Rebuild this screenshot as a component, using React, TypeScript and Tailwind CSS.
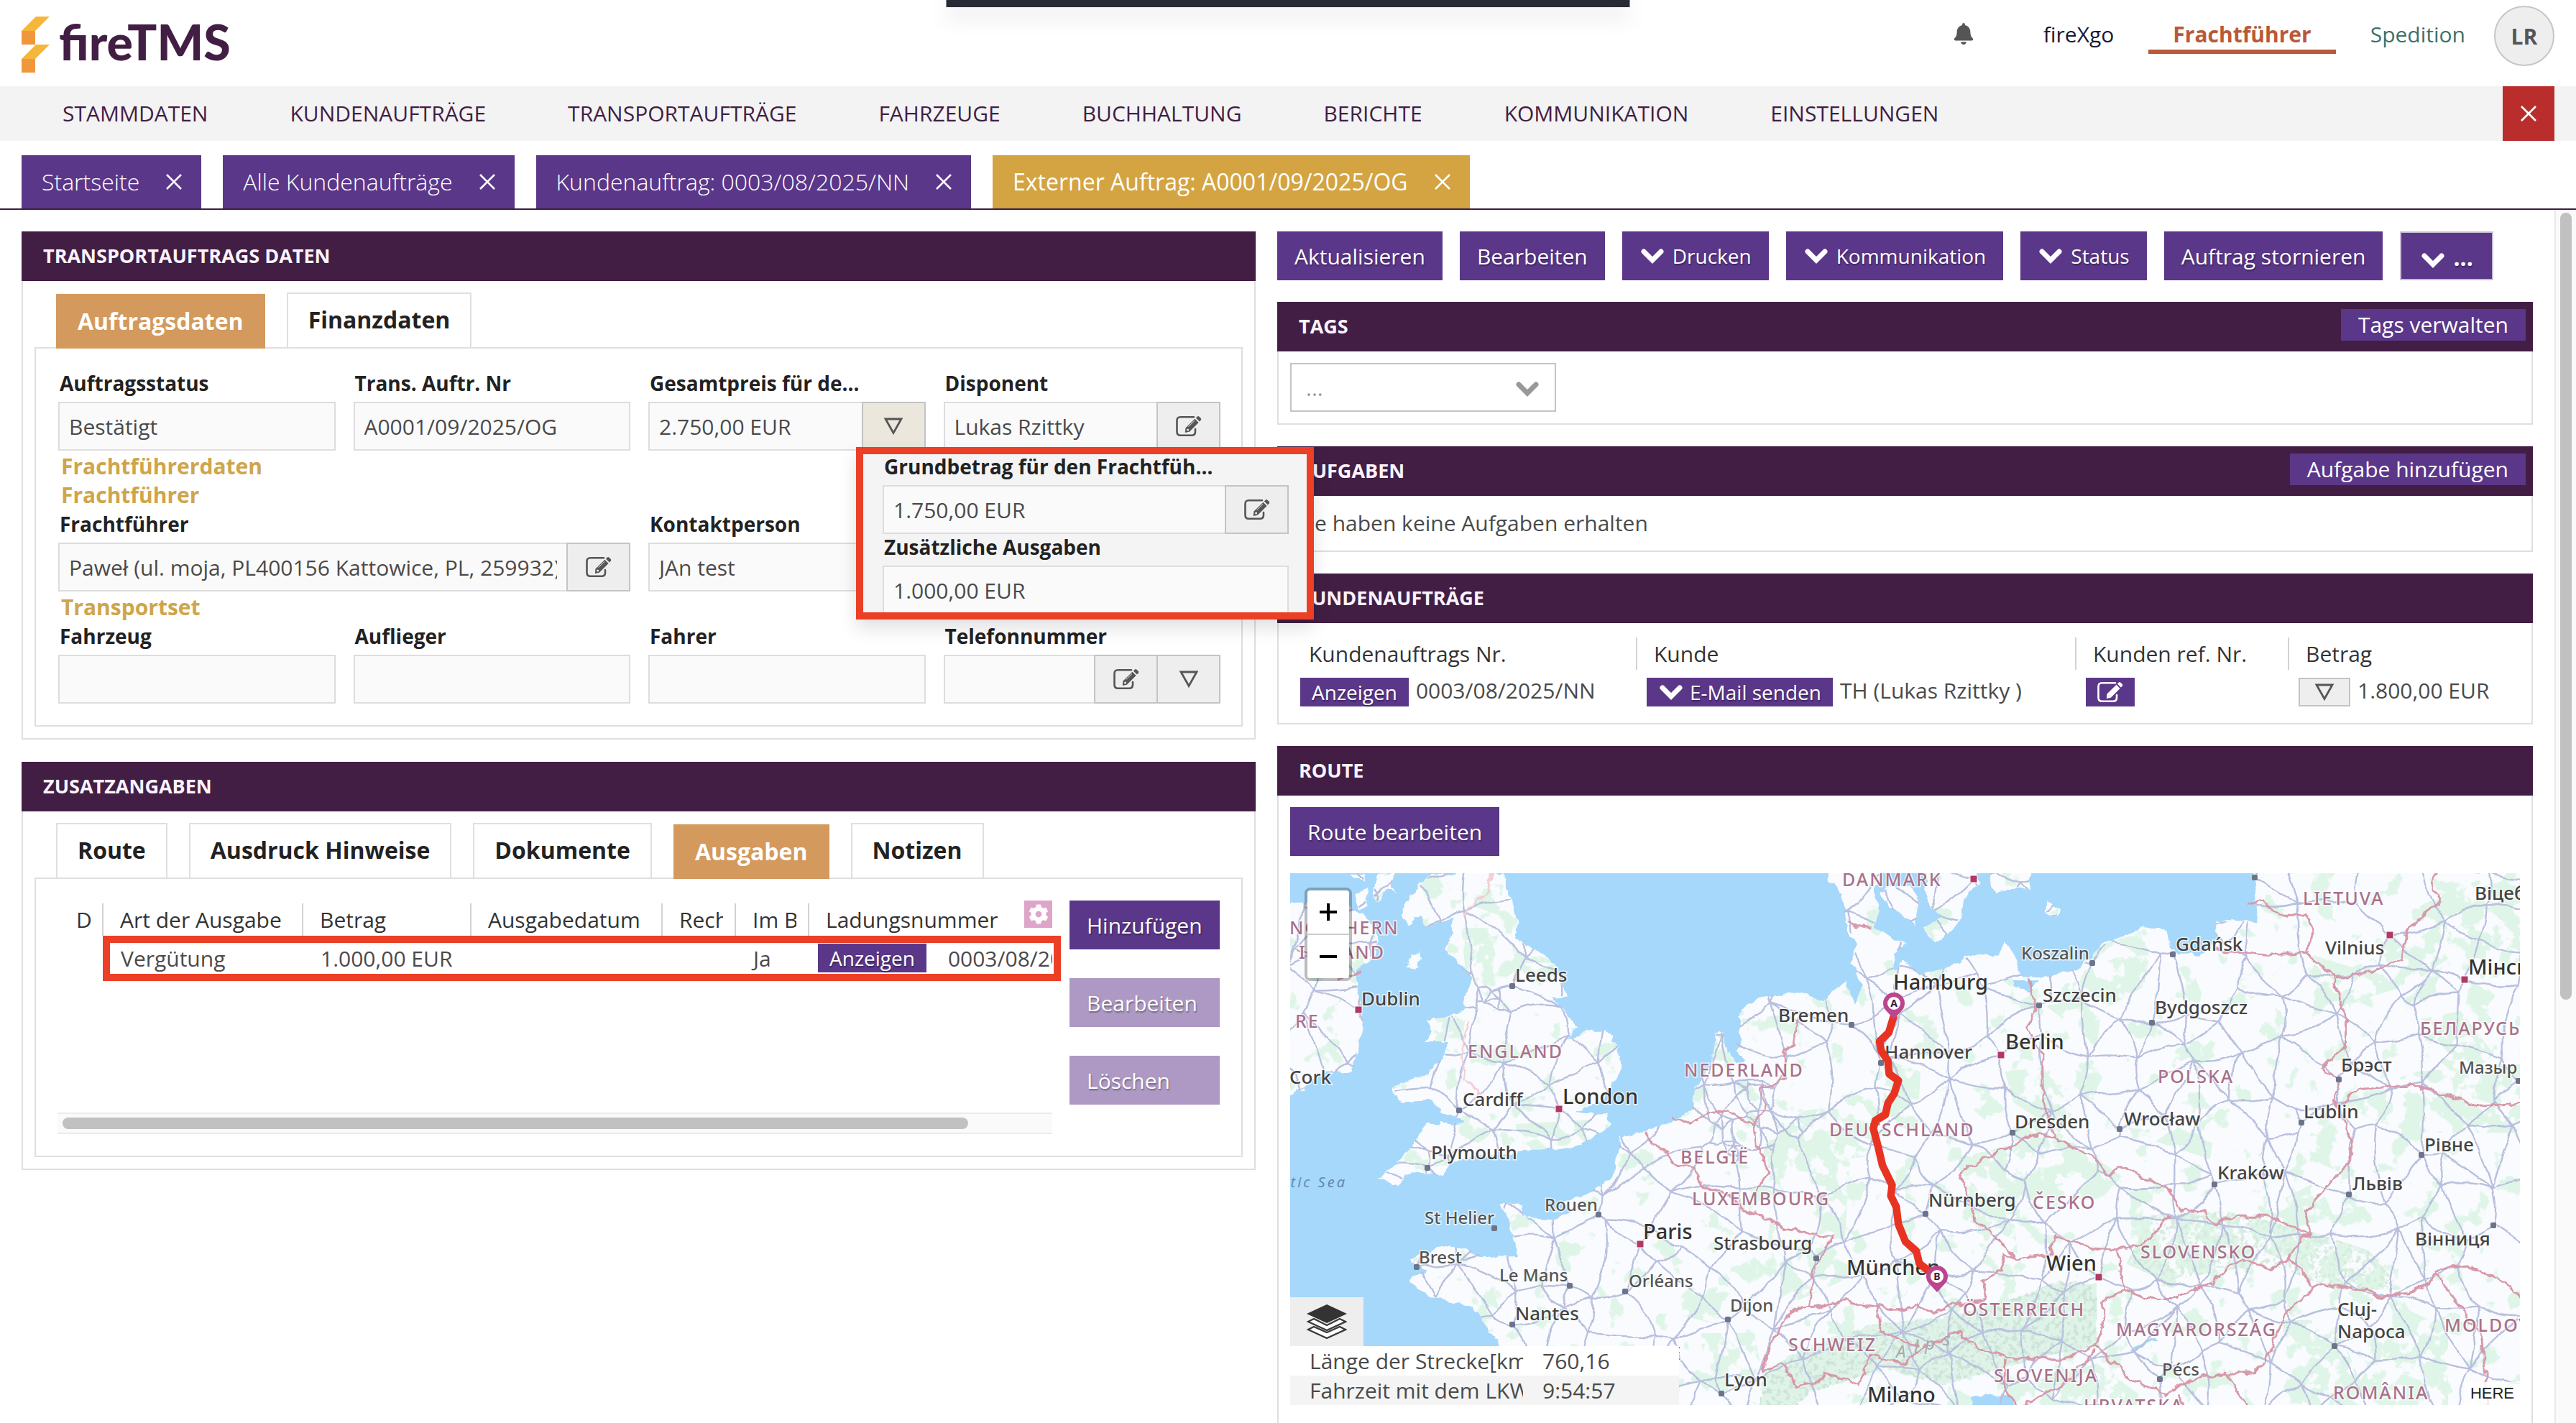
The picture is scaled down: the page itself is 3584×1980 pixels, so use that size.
import { useMemo, type ReactNode } from 'react';
import { FaBell, FaCog } from 'react-icons/fa';

/* ---------- icons ---------- */

function Chevron({ className }: { className: string }) {
  return (
    <svg viewBox="0 0 32 24" className={className} aria-hidden="true">
      <path d="M4 6 L16 18 L28 6" fill="none" stroke="currentColor" strokeWidth="7" strokeLinecap="round" strokeLinejoin="miter" />
    </svg>
  );
}

function Cross({ className }: { className: string }) {
  return (
    <svg viewBox="0 0 24 24" className={className} aria-hidden="true">
      <path d="M2 2 L22 22 M22 2 L2 22" fill="none" stroke="currentColor" strokeWidth="2.6" />
    </svg>
  );
}

function EditIcon({ className }: { className: string }) {
  return (
    <svg viewBox="0 0 36 30" className={className} aria-hidden="true">
      <path d="M25 2.2 H6.5 Q1.5 2.2 1.5 7.2 V22.8 Q1.5 27.8 6.5 27.8 H22 Q27 27.8 27 22.8 V19" fill="none" stroke="currentColor" strokeWidth="2.6" strokeLinecap="round" />
      <path d="M13.5 17.5 L26.5 4.8 L31.6 10 L18.8 22.8 L12.8 24 Z" fill="currentColor" />
      <path d="M27.8 3.6 L30 1.5 Q31.2 .6 32.4 1.7 L34.8 4.1 Q35.8 5.3 34.8 6.5 L32.8 8.6 Z" fill="currentColor" />
      <path d="M17.5 15.6 L26 7.4" stroke="#eee" strokeWidth="1" />
      <circle cx="16.6" cy="20" r="1.5" fill="#eee" />
    </svg>
  );
}

function Triangle({ className }: { className: string }) {
  return (
    <svg viewBox="0 0 28 26" className={className} aria-hidden="true">
      <path d="M3 3 H25 L14 22.5 Z" fill="none" stroke="currentColor" strokeWidth="2.8" />
    </svg>
  );
}

function LayersIcon({ className }: { className: string }) {
  return (
    <svg viewBox="0 0 56 50" className={className} aria-hidden="true">
      <path d="M2 36 L28 48 L54 36 L46 32 L28 40 L10 32 Z" fill="#fff" stroke="#3a3a3a" strokeWidth="2.4" />
      <path d="M2 25 L28 37 L54 25 L46 21 L28 30 L10 21 Z" fill="#fff" stroke="#3a3a3a" strokeWidth="2.4" />
      <path d="M0 14 L28 1 L56 14 L28 27 Z" fill="#333" />
    </svg>
  );
}

function FlameLogo() {
  return (
    <svg viewBox="0 0 40 78" className="h-[78px] w-10" aria-hidden="true">
      <path d="M20 0 H39 L19 20 H0 Z M20 39 H39 L19 59 H0 Z" fill="#f5b63c" />
      <path d="M0 20 H19 V39 H0 Z M0 59 H19 V78 H0 Z" fill="#f0973c" />
    </svg>
  );
}

/* ---------- small building blocks ---------- */

const NAV = ['STAMMDATEN', 'KUNDENAUFTRÄGE', 'TRANSPORTAUFTRÄGE', 'FAHRZEUGE', 'BUCHHALTUNG', 'BERICHTE', 'KOMMUNIKATION', 'EINSTELLUNGEN'];

const PAGES = [
  { title: 'Startseite', active: false },
  { title: 'Alle Kundenaufträge', active: false },
  { title: 'Kundenauftrag: 0003/08/2025/NN', active: false },
  { title: 'Externer Auftrag: A0001/09/2025/OG', active: true },
];

function Panel({ title, action, children, className = '' }: { title: string; action?: string; children: ReactNode; className?: string }) {
  return (
    <section>
      <header className="flex h-[69px] items-center justify-between bg-[#421e44] pl-[30px] pr-[10px]">
        <h2 className="text-[27px] font-bold text-[#fbf3fb]">{title}</h2>
        {action && (
          <button type="button" className="mb-[6px] h-11 bg-[#5b3789] px-6 text-[30px] leading-10 text-white">
            {action}
          </button>
        )}
      </header>
      <div className={`border-2 border-t-0 border-[#dfdfdf] ${className}`}>{children}</div>
    </section>
  );
}

function PurpleButton({ children, className = 'px-6 text-[30px]', disabled }: { children: ReactNode; className?: string; disabled?: boolean }) {
  return (
    <button
      type="button"
      disabled={disabled}
      className={`flex h-[68px] items-center gap-[10px] bg-[#5b3789] whitespace-nowrap text-white [text-shadow:1px_2px_2px_rgba(0,0,0,0.35)] disabled:bg-[#ad99c4] ${className}`}
    >
      {children}
    </button>
  );
}

function SmallButton({ children, className = '', label }: { children: ReactNode; className?: string; label?: string }) {
  return (
    <button
      type="button"
      aria-label={label}
      className={`inline-flex h-10 shrink-0 items-center gap-2 bg-[#5b3789] px-4 text-[28px] text-white [text-shadow:1px_2px_2px_rgba(0,0,0,0.35)] ${className}`}
    >
      {children}
    </button>
  );
}

function TabStrip({ tabs, active }: { tabs: string[]; active: string }) {
  return (
    <div role="tablist" className="relative z-[1] -mb-[2px] flex h-[78px] items-end gap-[30px] px-[30px]">
      {tabs.map((t) =>
        t === active ? (
          <button key={t} type="button" role="tab" aria-selected="true" className="h-[76px] bg-[#d4995c] px-[30px] text-[32px] font-bold text-white">
            {t}
          </button>
        ) : (
          <button key={t} type="button" role="tab" aria-selected="false" className="h-[78px] border-2 border-[#dfdfdf] bg-white px-7 pb-[2px] text-[32px] font-bold text-[#222]">
            {t}
          </button>
        ),
      )}
    </div>
  );
}

function Field({ id, label, value = '', buttons = [], open, className = '', children }: {
  id: string;
  label: string;
  value?: string;
  buttons?: ('edit' | 'more')[];
  open?: boolean;
  className?: string;
  children?: ReactNode;
}) {
  return (
    <div className={`relative min-w-0 ${className}`}>
      <label htmlFor={id} className="mb-1 block truncate pl-[2px] text-[28px] leading-11 font-bold text-[#222]">
        {label}
      </label>
      <div className="flex h-[68px]">
        <input id={id} readOnly value={value} className="w-0 min-w-0 flex-1 border-2 border-[#dfdcdf] bg-[#fafafa] px-[13px] text-[30px] text-[#4a4a4a] outline-none" />
        {buttons.map((b) => (
          <button
            key={b}
            type="button"
            aria-label={b === 'edit' ? `${label} bearbeiten` : `${label} Details`}
            className={`-ml-[2px] flex w-[89px] items-center justify-center border-2 border-[#c4c4c4] text-[#555] ${open && b === 'more' ? 'bg-[#ece7dd]' : 'bg-[#eee]'}`}
          >
            {b === 'edit' ? <EditIcon className="h-[30px] w-9" /> : <Triangle className="h-[26px] w-7" />}
          </button>
        ))}
      </div>
      {children}
    </div>
  );
}

function SectionTitle({ children }: { children: ReactNode }) {
  return <h3 className="col-span-4 px-1 pt-1 text-[30px] leading-9 font-bold text-[#cfa54b]">{children}</h3>;
}

/* ---------- map ---------- */

const LAND = [
  // Great Britain
  'M400 304 L350 350 L325 400 L345 425 L375 400 L380 430 L450 410 L440 450 L435 480 L470 520 L495 545 L475 600 L480 615 L440 635 L385 640 L395 665 L380 690 L440 690 L430 720 L390 765 L305 795 L325 830 L400 825 L420 855 L465 865 L480 875 L445 880 L390 880 L360 915 L330 960 L270 1005 L315 1020 L350 985 L425 1000 L440 970 L500 955 L560 955 L620 940 L720 935 L780 915 L825 885 L820 860 L740 850 L800 830 L850 750 L845 700 L810 665 L770 665 L720 690 L745 655 L690 590 L720 585 L700 520 L665 490 L600 455 L605 420 L580 340 L570 304 Z',
  // Ireland and small islands
  'M20 375 L110 370 L190 375 L240 400 L265 440 L270 480 L215 530 L225 580 L235 640 L225 690 L210 760 L130 765 L90 800 L20 830 Z',
  'M340 520 L350 495 L370 485 L375 500 L355 522 Z',
  'M205 304 L240 304 L235 325 Z M270 304 L310 304 L300 335 L315 350 L290 340 L270 370 L258 355 Z M215 355 L245 340 L240 375 L225 385 Z',
  // Continent
  'M1345 280 L1350 330 L1385 350 L1385 420 L1420 470 L1400 510 L1430 560 L1410 605 L1390 555 L1350 580 L1335 600 L1275 575 L1180 590 L1130 630 L1140 680 L1105 720 L1098 670 L1078 670 L1070 740 L1030 790 L1020 850 L960 880 L850 910 L840 960 L835 1000 L770 1040 L710 1060 L735 1080 L690 1100 L620 1095 L612 1065 L565 1060 L590 1120 L605 1180 L540 1190 L490 1170 L440 1160 L370 1180 L345 1195 L385 1215 L345 1240 L375 1270 L440 1285 L510 1310 L525 1340 L560 1385 L600 1470 L640 1560 L3040 1560 L3040 280 L2363 280 L2375 415 L2275 415 L2275 460 L2230 495 L2165 480 L2155 432 L2100 430 L2000 470 L1950 520 L1860 545 L1810 540 L1790 490 L1770 460 L1755 495 L1690 490 L1640 520 L1568 535 L1530 505 L1505 530 L1500 490 L1535 470 L1500 450 L1455 430 L1470 390 L1455 340 L1480 280 Z',
  'M1470 345 L1540 330 L1565 370 L1555 425 L1530 400 L1495 385 Z',
  'M1585 280 L1700 280 L1705 330 L1670 360 L1665 400 L1640 440 L1600 460 L1575 430 L1620 405 L1590 380 L1575 340 Z',
  'M1730 280 L1830 280 L1828 345 L1800 335 L1745 352 Z',
  'M1868 368 L1900 385 L1892 405 L1865 392 Z',
];

const WATER = [
  'M1108 690 L1140 680 L1130 710 L1150 730 L1125 745 L1112 720 Z',
  'M2065 1395 L2130 1370 L2135 1375 L2075 1402 Z',
  'M1690 1510 L1730 1500 L1785 1505 L1795 1560 L1695 1560 Z',
  'M1790 550 L1850 555 L1830 575 L1795 565 Z',
];

const FORESTS = [
  'M470 430 L560 430 L540 560 L480 540 Z', 'M380 630 L480 620 L470 720 L390 700 Z', 'M500 330 L570 330 L560 400 L500 380 Z', 'M590 470 L700 510 L600 510 Z',
  'M1290 850 L1450 820 L1460 950 L1400 960 L1380 1240 L1240 1300 L1230 1200 L1330 1120 L1300 990 L1200 980 L1210 890 Z',
  'M1480 730 L1568 760 L1560 900 L1470 870 Z', 'M1650 960 L1900 900 L2050 1000 L2000 1050 L1790 1080 L1800 1180 L1700 1100 Z',
  'M1930 540 L2080 480 L2110 560 L2000 620 L1990 700 L1870 610 Z', 'M1770 760 L1860 750 L1930 840 L1900 900 L1790 830 Z',
  'M2500 490 L2600 520 L2750 460 L2760 380 L2900 320 L3040 340 L3040 480 L2920 560 L2860 480 L2740 560 L2600 600 Z',
  'M2570 830 L2750 760 L3040 740 L3040 900 L2750 900 L2650 870 Z', 'M2760 640 L2860 620 L2940 720 L2880 770 Z',
  'M2120 1090 L2300 1080 L2480 1120 L2640 1170 L2720 1260 L2560 1260 L2400 1200 L2150 1240 L2060 1200 Z',
  'M2430 1330 L2560 1330 L2620 1470 L2720 1300 L2830 1350 L2830 1560 L2480 1560 Z',
  'M2160 900 L2280 860 L2260 960 L2130 920 Z', 'M2500 900 L2580 920 L2570 990 L2500 960 Z', 'M2440 1050 L2520 1010 L2560 1100 L2470 1110 Z',
  'M640 1060 L680 1040 L620 1120 Z', 'M990 1240 L1100 1260 L1080 1340 L1000 1320 Z', 'M1800 1480 L1990 1430 L2090 1500 L2080 1560 L1790 1560 Z',
  'M600 880 L780 870 L720 930 L600 930 Z', 'M1040 1360 L1060 1480 L1190 1450 L1170 1360 Z',
];

const ALPS = 'M1190 1450 L1300 1390 L1460 1340 L1640 1320 L1760 1290 L1900 1240 L1990 1250 L1990 1390 L1880 1410 L1770 1440 L1620 1480 L1480 1440 L1300 1500 L1240 1560 L1180 1560 Z';

const BORDERS = [
  'M1275 635 L1265 700 L1240 710 L1245 770 L1185 800 L1195 840 L1170 880 L1175 930 L1205 990 L1190 1010 L1175 1045',
  'M975 860 L1010 880 L1060 855 L1110 850 L1170 885',
  'M910 895 L925 930 L965 945 L975 970 L1030 985 L1045 1025 L1110 1040 L1145 1080 L1190 1090 L1245 1120 L1355 1140 L1310 1220 L1300 1300 L1255 1315 L1210 1380 L1190 1450 L1240 1430 L1270 1480 L1330 1470 L1340 1450 L1420 1480 L1450 1410 L1530 1430 L1580 1385 L1660 1360 L1700 1395 L1790 1420 L1900 1420 L1990 1390 L2010 1310 L2000 1290 L2055 1260 L2040 1170',
  'M1300 1300 L1390 1285 L1465 1300 L1530 1310 L1555 1290 L1600 1315 L1665 1290 L1725 1285 L1715 1240 L1765 1215 L1765 1180 L1795 1190 L1760 1150 L1700 1100 L1660 990 L1740 950 L1840 905 L1890 910 L1960 945 L2000 975 L2020 1000 L2045 975 L2100 1000 L2165 1030 L2190 1080 L2240 1080 L2275 1110 L2330 1090 L2400 1090 L2500 1135',
  'M1465 1300 L1470 1350 L1530 1380 L1560 1390',
  'M1795 1190 L1880 1180 L1890 1140 L1980 1165 L2040 1170 L2105 1155 L2165 1090',
  'M2055 1260 L2100 1280 L2180 1280 L2270 1240 L2330 1190 L2400 1210 L2450 1190',
  'M1825 545 L1845 610 L1820 660 L1860 720 L1860 820 L1890 910',
  'M2490 485 L2555 540 L2585 640 L2585 700 L2530 750 L2565 780 L2560 830 L2600 920 L2595 970 L2540 1020 L2490 1080 L2500 1135 L2475 1140 L2450 1190 L2510 1250 L2630 1260 L2670 1280 L2770 1255 L2800 1220 L2850 1290 L2910 1370 L2930 1560',
  'M2275 480 L2400 493 L2500 485 M2350 370 L2390 370 L2430 400 L2490 400 L2505 430 L2490 485',
  'M2800 290 L2790 340 L2810 370 L2760 410 L2735 430 L2720 500 L2650 530 L2560 545',
  'M2565 840 L2620 800 L2740 790 L2850 820 L2900 840 L2960 835 L3040 830',
  'M2800 1215 L2880 1205 L2960 1240 L3040 1310',
  'M2510 1250 L2440 1320 L2400 1410 L2370 1450 L2240 1460 L2150 1500 L2060 1460 L1990 1390',
  'M1770 1420 L1770 1490 L1800 1530 L1910 1480 L1990 1400 M2300 1450 L2370 1560 M2190 1500 L2210 1560',
  'M75 480 L130 500 L180 545 L235 525 M1390 418 L1450 430',
];

const PALE_BORDERS = 'M490 640 L470 700 L475 780 L520 810 M475 400 L530 350 L550 290';

const ROUTE = 'M1503 635 L1492 670 L1470 690 L1474 712 L1490 735 L1493 765 L1515 780 L1505 810 L1490 832 L1484 858 L1460 872 L1455 890 L1466 930 L1477 975 L1500 1020 L1497 1045 L1510 1070 L1515 1110 L1532 1150 L1558 1172 L1565 1200 L1602 1228';

type Label = [string, number, number];

const BIG: Label[] = [['London', 712, 833], ['Paris', 905, 1144], ['Hamburg', 1503, 572], ['München', 1390, 1226], ['Milano', 1440, 1519], ['Berlin', 1770, 709], ['Мінск', 2878, 536], ['Wien', 1868, 1216]];
const MEDIUM: Label[] = [['Leeds', 598, 553], ['Dublin', 230, 608], ['Cork', 58, 788], ['Cardiff', 472, 838], ['Plymouth', 397, 961], ['Nantes', 598, 1330], ['Bremen', 1228, 645], ['Hannover', 1482, 730], ['Strasbourg', 1072, 1168], ['Lyon', 1098, 1482], ['Szczecin', 1860, 599], ['Gdańsk', 2179, 482], ['Bydgoszcz', 2128, 628], ['Vilnius', 2536, 490], ['Віцебск', 2894, 365], ['Брэст', 2573, 760], ['Lublin', 2485, 867], ['Рівне', 2773, 942], ['Львів', 2601, 1032], ['Kraków', 2278, 1007], ['Wrocław', 2054, 884], ['Dresden', 1794, 890], ['Nürnberg', 1586, 1070], ['Вінниця', 2751, 1158], ['Cluj-', 2566, 1320], ['Napoca', 2566, 1371]];
const SMALL: Label[] = [['St Helier', 381, 1109], ['Rouen', 668, 1079], ['Brest', 368, 1200], ['Le Mans', 561, 1242], ['Orléans', 870, 1255], ['Dijon', 1113, 1311], ['Koszalin', 1809, 502], ['Мазыр', 2856, 764], ['Pécs', 2145, 1458]];
const COUNTRIES: Label[] = [['DANMARK', 1380, 333], ['NORTHERN', 58, 445], ['IRELAND', 80, 500], ['RE', 72, 659], ['ENGLAND', 484, 728], ['NEDERLAND', 1003, 771], ['BELGIË', 993, 970], ['LUXEMBOURG', 1022, 1067], ['DEUTSCHLAND', 1350, 908], ['SCHWEIZ', 1252, 1402], ['FRANCE', 815, 1421], ['POLSKA', 2136, 786], ['LIETUVA', 2482, 377], ['БЕЛАРУСЬ', 2763, 675], ['ČESKO', 1836, 1075], ['SLOVENSKO', 2094, 1188], ['ÖSTERREICH', 1670, 1320], ['MAGYARORSZÁG', 2035, 1367], ['SLOVENIJA', 1743, 1473], ['HRVATSKA', 1958, 1541], ['MOLDOVA', 2821, 1357], ['ROMÂNIA', 2554, 1512]];

const CAPITALS: [number, number][] = [[224, 618], [703, 845], [897, 1156], [1760, 722], [1994, 1231], [2691, 446], [2869, 548], [1696, 317]];
const TOWNS: [number, number][] = [[592, 563], [464, 848], [389, 980], [548, 1119], [798, 1088], [362, 1209], [728, 1251], [861, 1264], [591, 1340], [1402, 652], [1474, 740], [1319, 1188], [1107, 1329], [1091, 1499], [1979, 510], [1852, 608], [2172, 490], [2122, 647], [2568, 778], [2998, 781], [2479, 876], [2767, 951], [2593, 1042], [2272, 1018], [2044, 892], [1788, 900], [1580, 1087], [2939, 1112], [2559, 1390], [2140, 1466], [2368, 314]];

const SX = 0.5816;
const SY = 0.606;
const px = (u: number) => Math.round((u - 60) * SX);
const py = (v: number) => Math.round((v - 304) * SY);

/* Joins neighbouring road nodes wherever no third node lies between the two. */
function buildRoads(): string {
  let seed = 11;
  const rnd = () => {
    seed = (seed * 1103515245 + 12345) % 2147483648;
    return seed / 2147483648;
  };
  const nodes: [number, number][] = [...CAPITALS, ...TOWNS, [1503, 600], [1602, 1230]];
  for (let x = 60; x < 3040; x += 105) {
    for (let y = 290; y < 1560; y += 105) {
      nodes.push([x + (rnd() - 0.5) * 90, y + (rnd() - 0.5) * 90]);
    }
  }
  for (let i = 0; i < 34; i++) nodes.push([1040 + rnd() * 260, 760 + rnd() * 210]);
  for (let i = 0; i < 10; i++) nodes.push([500 + rnd() * 80, 560 + rnd() * 60]);
  const parts: string[] = [];
  for (let i = 0; i < nodes.length; i++) {
    for (let j = i + 1; j < nodes.length; j++) {
      const [ax, ay] = nodes[i];
      const [bx, by] = nodes[j];
      const d = (ax - bx) ** 2 + (ay - by) ** 2;
      if (d > 40000) continue;
      const mx = (ax + bx) / 2;
      const my = (ay + by) / 2;
      const blocked = nodes.some(([cx, cy], k) => k !== i && k !== j && (cx - mx) ** 2 + (cy - my) ** 2 < d / 4);
      if (blocked) continue;
      const bend = (rnd() - 0.5) * 0.35;
      parts.push(`M${ax.toFixed(0)} ${ay.toFixed(0)} Q${(mx + (by - ay) * bend).toFixed(0)} ${(my - (bx - ax) * bend).toFixed(0)} ${bx.toFixed(0)} ${by.toFixed(0)}`);
    }
  }
  return parts.join(' ');
}

function Pin({ u, v, letter }: { u: number; v: number; letter: string }) {
  const x = px(u);
  const y = py(v);
  return (
    <g>
      <path d={`M${x} ${y + 22} L${x - 12} ${y + 9} A15 15 0 1 1 ${x + 12} ${y + 9} Z`} fill="#bd4590" />
      <circle cx={x} cy={y} r="9" fill="#fff" />
      <text x={x} y={y + 5} textAnchor="middle" className="fill-[#3a1b3c] text-[14px] font-bold">
        {letter}
      </text>
    </g>
  );
}

function Labels({ items, className }: { items: Label[]; className: string }) {
  return (
    <g className={className}>
      {items.map(([t, u, v]) => (
        <text key={t} x={px(u)} y={py(v)} stroke="#fff" strokeOpacity="0.75" strokeWidth="3" paintOrder="stroke">
          {t}
        </text>
      ))}
    </g>
  );
}

function EuropeMap() {
  const roads = useMemo(buildRoads, []);
  return (
    <svg viewBox="0 0 1711 740" preserveAspectRatio="xMinYMin slice" className="block h-full w-full bg-[#a6d8fb] font-['Noto_Sans','Open_Sans',sans-serif]" role="img" aria-label="Routenkarte">
      <defs>
        <filter id="rough" x="0" y="0" width="100%" height="100%">
          <feTurbulence type="fractalNoise" baseFrequency="0.035" numOctaves="3" seed="4" />
          <feDisplacementMap in="SourceGraphic" scale="20" xChannelSelector="R" yChannelSelector="G" />
        </filter>
        <filter id="wobble" x="0" y="0" width="100%" height="100%">
          <feTurbulence type="fractalNoise" baseFrequency="0.02" numOctaves="2" seed="9" />
          <feDisplacementMap in="SourceGraphic" scale="16" xChannelSelector="R" yChannelSelector="G" />
        </filter>
        <filter id="patches" x="0" y="0" width="100%" height="100%">
          <feTurbulence type="fractalNoise" baseFrequency="0.022" numOctaves="4" seed="21" result="n" />
          <feColorMatrix in="n" values="0 0 0 0 0  0 0 0 0 0  0 0 0 0 0  16 0 0 0 -7.2" result="m" />
          <feComposite in="SourceGraphic" in2="m" operator="in" />
        </filter>
        <filter id="sparse" x="0" y="0" width="100%" height="100%">
          <feTurbulence type="fractalNoise" baseFrequency="0.016" numOctaves="4" seed="5" result="n" />
          <feColorMatrix in="n" values="0 0 0 0 0  0 0 0 0 0  0 0 0 0 0  16 0 0 0 -9.8" result="m" />
          <feComposite in="SourceGraphic" in2="m" operator="in" />
        </filter>
        <filter id="relief" x="0" y="0" width="100%" height="100%">
          <feTurbulence type="fractalNoise" baseFrequency="0.09" numOctaves="3" seed="2" result="n" />
          <feColorMatrix in="n" values="0 0 0 0 0  0 0 0 0 0  0 0 0 0 0  7 0 0 0 -3.5" result="m" />
          <feComposite in="SourceGraphic" in2="m" operator="in" />
        </filter>
        <clipPath id="land">
          <path d={LAND.join(' ')} />
        </clipPath>
      </defs>
      <g transform="scale(0.5816 0.606) translate(-60 -304)">
        <g filter="url(#rough)">
          <path d={LAND.join(' ')} fill="#fafbfe" />
        </g>
        <g clipPath="url(#land)">
          <rect x="60" y="290" width="2980" height="1270" fill="#def5e8" filter="url(#sparse)" />
          <path d={FORESTS.join(' ')} fill="#def5e8" filter="url(#patches)" />
          <path d={ALPS} fill="#e0f3e8" filter="url(#rough)" />
          <path d={ALPS} fill="#cde4d9" filter="url(#relief)" />
          <path d={FORESTS[12]} fill="#d6ecdf" filter="url(#relief)" />
        </g>
        <path d={WATER.join(' ')} fill="#a6d8fb" filter="url(#rough)" />
        <g clipPath="url(#land)">
          <path d={roads} fill="none" stroke="#b9c0de" strokeWidth="4" filter="url(#wobble)" />
        </g>
        <g fill="none" filter="url(#rough)">
          <path d={PALE_BORDERS} stroke="#f3cfd6" strokeWidth="5" />
          <path d={BORDERS.join(' ')} stroke="#d898aa" strokeWidth="5" strokeLinejoin="round" />
        </g>
      </g>
      {TOWNS.map(([u, v]) => (
        <rect key={`${u}-${v}`} x={px(u) - 4} y={py(v) - 4} width="8" height="8" rx="2" fill="#6d7389" />
      ))}
      {CAPITALS.map(([u, v]) => (
        <rect key={`${u}-${v}`} x={px(u) - 5} y={py(v) - 5} width="10" height="10" fill="#b03a64" stroke="#fff" strokeWidth="1" />
      ))}
      <Labels items={COUNTRIES} className="fill-[#a9718a] text-[25px] font-medium tracking-[2px]" />
      <Labels items={SMALL} className="fill-[#555] text-[24px] font-medium" />
      <Labels items={MEDIUM} className="fill-[#444] text-[26px] font-medium" />
      <Labels items={BIG} className="fill-[#333] text-[29px] font-medium" />
      <text x={px(195)} y={py(1025)} textAnchor="end" className="fill-[#5e8bb3] text-[20px] tracking-[3px] italic">Celtic Sea</text>
      <g className="fill-[#a5aab0] text-[24px] italic">
        <text x={px(1510)} y={py(1416)}>A</text>
        <text x={px(1553)} y={py(1404)}>l</text>
        <text x={px(1578)} y={py(1398)}>p</text>
        <text x={px(1622)} y={py(1388)}>s</text>
      </g>
      <path d={ROUTE} transform="scale(0.5816 0.606) translate(-60 -304)" fill="none" stroke="#e83323" strokeWidth="18" strokeLinejoin="round" strokeLinecap="round" />
      <Pin u={1504} v={602} letter="A" />
      <Pin u={1607} v={1229} letter="B" />
    </svg>
  );
}

/* ---------- tables ---------- */

function ExpenseTable() {
  const th = 'h-11 overflow-hidden border-l-2 border-[#d2d2d2] pl-[23px] pr-4 text-left font-normal whitespace-nowrap text-[#333]';
  const clip = 'block overflow-hidden';
  return (
    <table className="w-[1440px] table-fixed border-collapse text-[30px]">
      <colgroup>
        <col className="w-[63px]" />
        <col className="w-[278px]" />
        <col className="w-[234px]" />
        <col className="w-[266px]" />
        <col className="w-[102px]" />
        <col className="w-[102px]" />
        <col />
      </colgroup>
      <thead>
        <tr>
          <th scope="col" className="h-11 pl-[26px] pr-[13px] text-left font-normal text-[#333]"><span className={clip}>Dok</span></th>
          <th scope="col" className={th}><span className={clip}>Art der Ausgabe</span></th>
          <th scope="col" className={th}><span className={clip}>Betrag</span></th>
          <th scope="col" className={th}><span className={clip}>Ausgabedatum</span></th>
          <th scope="col" className={th}><span className={clip}>Rechnung</span></th>
          <th scope="col" className={th}><span className={clip}>Im Betrag</span></th>
          <th scope="col" className={th}>Ladungsnummer</th>
        </tr>
      </thead>
      <tbody>
        <tr className="h-[62px] text-[#4a4a4a]">
          <td />
          <td className="pl-[25px]">Vergütung</td>
          <td className="pl-[25px]">1.000,00 EUR</td>
          <td />
          <td />
          <td className="pl-[25px]">Ja</td>
          <td className="pl-[13px] whitespace-nowrap">
            <div className="flex items-center gap-[30px]">
              <SmallButton>Anzeigen</SmallButton>
              <span>0003/08/2025/NN</span>
            </div>
          </td>
        </tr>
      </tbody>
    </table>
  );
}

function OrderTable() {
  const th = 'h-11 border-l-2 border-[#d2d2d2] pl-[23px] text-left font-normal whitespace-nowrap text-[#333]';
  return (
    <table className="w-full table-fixed border-collapse text-[30px] text-[#4a4a4a]">
      <colgroup>
        <col className="w-[482px]" />
        <col className="w-[611px]" />
        <col className="w-[296px]" />
        <col />
      </colgroup>
      <thead>
        <tr>
          <th scope="col" className="h-11 pl-[26px] text-left font-normal text-[#333]">Kundenauftrags Nr.</th>
          <th scope="col" className={th}>Kunde</th>
          <th scope="col" className={th}>Kunden ref. Nr.</th>
          <th scope="col" className={th}>Betrag</th>
        </tr>
      </thead>
      <tbody>
        <tr className="h-[62px] whitespace-nowrap">
          <td className="pl-[14px]">
            <div className="flex items-center gap-[10px]"><SmallButton>Anzeigen</SmallButton><span className="leading-9 pb-1">0003/08/2025/NN</span></div>
          </td>
          <td className="pl-[14px]">
            <div className="flex items-center gap-[10px]">
              <SmallButton><Chevron className="h-6 w-9" />E-Mail senden</SmallButton>
              <span className="leading-9 pb-1">TH (Lukas Rzittky )</span>
            </div>
          </td>
          <td className="pl-[14px]">
            <div className="flex items-center"><SmallButton label="Referenz bearbeiten"><EditIcon className="h-[30px] w-9" /></SmallButton></div>
          </td>
          <td className="pl-[14px]">
            <div className="flex items-center gap-[10px]">
              <button type="button" aria-label="Betrag Details" className="flex h-10 w-[72px] items-center justify-center border-2 border-[#c4c4c4] bg-[#eee] text-[#555]">
                <Triangle className="h-[26px] w-7" />
              </button>
              <span className="leading-9 pb-1">1.800,00 EUR</span>
            </div>
          </td>
        </tr>
      </tbody>
    </table>
  );
}

/* ---------- page ---------- */

export default function App() {
  return (
    <div className="flex h-screen flex-col overflow-hidden bg-white font-['Open_Sans','Noto_Sans',sans-serif] text-[#333]">
      <header className="relative flex h-[120px] shrink-0 items-start justify-between px-[30px]">
        <div className="absolute top-0 left-1/2 h-[10px] w-[951px] -translate-x-1/2 bg-[#282b36] shadow-[0_12px_30px_rgba(0,0,0,0.15)]" />
        <a href="#start" className="flex items-center gap-3 pt-[23px]" aria-label="fireTMS">
          <FlameLogo />
          <span className="mb-2 font-['Lato',sans-serif] text-[68px] leading-none font-black text-[#421e44]">fireTMS</span>
        </a>
        <div className="flex items-start pt-2 text-[30px]">
          <button type="button" aria-label="Benachrichtigungen" className="mt-6 mr-24 text-[#555]"><FaBell className="size-[30px]" /></button>
          <a href="#firexgo" className="mr-12 pt-5 leading-10 text-[#1c1738]">fireXgo</a>
          <a href="#frachtfuehrer" className="mr-12 border-b-6 border-[#b85a38] px-[34px] pt-5 pb-[1px] leading-10 font-bold text-[#b85a38]">Frachtführer</a>
          <a href="#spedition" className="mr-10 pt-5 leading-10 text-[#3a7269]">Spedition</a>
          <button type="button" className="size-[84px] rounded-full border-2 border-[#c6c6c6] bg-[#eee] font-bold text-[#555]">LR</button>
        </div>
      </header>

      <nav className="flex h-[76px] shrink-0 items-center bg-[#f3f3f3] px-[30px] text-[30px] leading-9 text-[#421e44]">
        {NAV.map((n) => (
          <a key={n} href={`#${n.toLowerCase()}`} className="px-[57px]">{n}</a>
        ))}
        <button type="button" aria-label="Alles schließen" className="ml-auto flex h-full w-[72px] items-center justify-center bg-[#b92e2c] text-white">
          <Cross className="size-6" />
        </button>
      </nav>

      <div className="flex shrink-0 items-end gap-[30px] border-b-2 border-[#3b1f40] px-[30px] pt-5">
        {PAGES.map((p) => (
          <div key={p.title} className={`flex h-[74px] items-center gap-9 pr-[26px] pl-7 text-[32px] text-white ${p.active ? 'bg-[#d3a441]' : 'bg-[#5b3789] font-light'}`}>
            <a href="#tab">{p.title}</a>
            <button type="button" aria-label={`${p.title} schließen`}><Cross className="size-6" /></button>
          </div>
        ))}
      </div>

      <div className="flex min-h-0 flex-1">
        <main className="grid min-w-0 flex-1 grid-cols-[1717fr_1747fr] gap-x-[30px] overflow-hidden px-[30px] pt-[30px]">
          <div className="flex min-w-0 flex-col gap-[31px]">
            <Panel title="TRANSPORTAUFTRAGS DATEN" className="p-4">
              <TabStrip tabs={['Auftragsdaten', 'Finanzdaten']} active="Auftragsdaten" />
              <div className="grid grid-cols-4 gap-x-[25px] border-2 border-[#dfdfdf] pt-[26px] pr-[29px] pb-[30px] pl-[31px]">
                <Field id="status" label="Auftragsstatus" value="Bestätigt" />
                <Field id="nr" label="Trans. Auftr. Nr" value="A0001/09/2025/OG" />
                <Field id="preis" label="Gesamtpreis für den Frachtführer" value="2.750,00 EUR" buttons={['more']} open className="z-10 [&>label]:pr-20">
                  <div className="absolute top-[calc(100%-5px)] left-[289px] h-[240px] w-[637px] overflow-hidden border-10 border-[#eb3f26] bg-[#f4f4f4] pr-[25px] pl-[27px] shadow-[0_12px_24px_rgba(0,0,0,0.12)]">
                    <Field id="grund" label="Grundbetrag für den Frachtführer" value="1.750,00 EUR" buttons={['edit']} className="-mt-[5px] [&>label]:pr-[104px]" />
                    <Field id="zusatz" label="Zusätzliche Ausgaben" value="1.000,00 EUR" className="-mt-1" />
                  </div>
                </Field>
                <Field id="disponent" label="Disponent" value="Lukas Rzittky" buttons={['edit']} />
                <SectionTitle>Frachtführerdaten</SectionTitle>
                <SectionTitle>Frachtführer</SectionTitle>
                <Field id="frachtf" label="Frachtführer" value="Paweł (ul. moja, PL400156 Kattowice, PL, 259932)" buttons={['edit']} className="col-span-2" />
                <Field id="kontakt" label="Kontaktperson" value="JAn test" className="col-span-2" />
                <SectionTitle>Transportset</SectionTitle>
                <Field id="fahrzeug" label="Fahrzeug" />
                <Field id="auflieger" label="Auflieger" />
                <Field id="fahrer" label="Fahrer" />
                <Field id="telefon" label="Telefonnummer" buttons={['edit', 'more']} />
              </div>
            </Panel>

            <Panel title="ZUSATZANGABEN" className="p-4">
              <TabStrip tabs={['Route', 'Ausdruck Hinweise', 'Dokumente', 'Ausgaben', 'Notizen']} active="Ausgaben" />
              <div className="flex gap-6 border-2 border-[#dfdfdf] p-[30px]">
                <div className="relative flex min-w-0 flex-1 flex-col">
                  <div className="h-[295px] overflow-hidden pt-1">
                    <ExpenseTable />
                  </div>
                  <div className="absolute top-[49px] -right-3 left-[63px] h-[63px] border-10 border-[#eb3f26]" />
                  <button type="button" aria-label="Spalten einstellen" className="absolute top-0 right-0 flex h-[38px] w-[39px] items-center justify-center bg-[#dfa5c9] text-white">
                    <FaCog className="size-7" />
                  </button>
                  <div className="flex h-[30px] items-center border-y-2 border-[#ebebeb] bg-[#fafafa] px-[7px]">
                    <div className="h-4 w-[92%] rounded-full bg-[#c1c1c1]" />
                  </div>
                </div>
                <div className="flex w-[209px] flex-col gap-10">
                  <PurpleButton>Hinzufügen</PurpleButton>
                  <PurpleButton disabled>Bearbeiten</PurpleButton>
                  <PurpleButton disabled>Löschen</PurpleButton>
                </div>
              </div>
            </Panel>
          </div>

          <div className="flex min-w-0 flex-col gap-[30px]">
            <div className="flex gap-6">
              <PurpleButton>Aktualisieren</PurpleButton>
              <PurpleButton>Bearbeiten</PurpleButton>
              <PurpleButton className="px-6 text-[28px]"><Chevron className="h-6 w-9" />Drucken</PurpleButton>
              <PurpleButton className="px-6 text-[28px]"><Chevron className="h-6 w-9" />Kommunikation</PurpleButton>
              <PurpleButton className="px-6 text-[28px]"><Chevron className="h-6 w-9" />Status</PurpleButton>
              <PurpleButton>Auftrag stornieren</PurpleButton>
              <PurpleButton className="border-2 border-[#c9bdd6] px-[26px] text-[32px] font-bold"><Chevron className="mt-3 h-6 w-9" /><span className="mt-1">...</span></PurpleButton>
            </div>

            <Panel title="TAGS" action="Tags verwalten" className="p-4">
              <div className="relative w-[370px]">
                <select aria-label="Tags" className="h-[68px] w-full appearance-none border-2 border-[#c4c4c4] bg-white px-5 text-[30px] text-[#999]">
                  <option>...</option>
                </select>
                <Chevron className="pointer-events-none absolute top-6 right-6 h-6 w-8 text-[#999]" />
              </div>
            </Panel>

            <Panel title="AUFGABEN" action="Aufgabe hinzufügen" className="px-[26px] py-[18px]">
              <p className="text-[30px] leading-10 text-[#4a4a4a]">Sie haben keine Aufgaben erhalten</p>
            </Panel>

            <Panel title="KUNDENAUFTRÄGE" className="px-4 pt-5 pb-3">
              <OrderTable />
            </Panel>

            <Panel title="ROUTE" className="p-4">
              <div className="flex"><PurpleButton>Route bearbeiten</PurpleButton></div>
              <div className="relative mt-6 h-[740px] overflow-hidden">
                <EuropeMap />
                <div className="absolute top-5 left-5 flex w-[66px] flex-col rounded-lg border-4 border-black/25 bg-clip-padding">
                  <button type="button" aria-label="Vergrößern" className="flex h-[60px] items-center justify-center rounded-t bg-white text-black">
                    <svg viewBox="0 0 24 24" className="size-6"><path d="M12 0 V24 M0 12 H24" stroke="currentColor" strokeWidth="4" /></svg>
                  </button>
                  <button type="button" aria-label="Verkleinern" className="flex h-[62px] items-center justify-center rounded-b border-t-2 border-[#ccc] bg-white text-black">
                    <svg viewBox="0 0 24 24" className="size-6"><path d="M0 12 H24" stroke="currentColor" strokeWidth="4" /></svg>
                  </button>
                </div>
                <div className="absolute bottom-0 left-0 w-[541px]">
                  <button type="button" aria-label="Kartenebenen" className="flex h-[68px] w-[102px] items-center justify-center bg-[#eee]">
                    <LayersIcon className="h-[50px] w-14" />
                  </button>
                  <dl className="text-[30px] leading-[41px] text-[#4a4a4a]">
                    <div className="flex bg-white pl-[27px]"><dt className="w-[297px] overflow-hidden whitespace-nowrap">Länge der Strecke[km]</dt><dd className="pl-[27px]">760,16</dd></div>
                    <div className="flex bg-[#f4f4f4] pl-[27px]"><dt className="w-[297px] overflow-hidden whitespace-nowrap">Fahrzeit mit dem LKW</dt><dd className="pl-[27px]">9:54:57</dd></div>
                  </dl>
                </div>
                <a href="#here" className="absolute right-0 bottom-0 bg-white/80 px-2 font-['Liberation_Sans',sans-serif] text-[22px] leading-8 text-[#222]">HERE</a>
              </div>
              <div className="h-20" />
            </Panel>
          </div>
        </main>
        <div className="w-[30px] shrink-0 border-l-2 border-[#e8e8e8] bg-[#fafafa] px-[6px] pt-1">
          <div className="h-[65%] rounded-full bg-[#c1c1c1]" />
        </div>
      </div>
    </div>
  );
}
